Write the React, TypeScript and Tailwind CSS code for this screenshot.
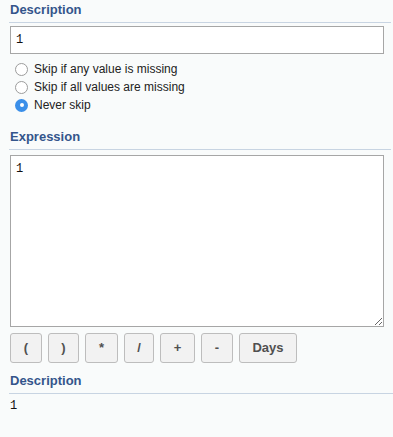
import React, { useState } from 'react';

const options = [
  'Skip if any value is missing',
  'Skip if all values are missing',
  'Never skip',
];

const buttons: { label: string; w: string }[] = [
  { label: '(', w: 'w-[32px]' },
  { label: ')', w: 'w-[31px]' },
  { label: '*', w: 'w-[33px]' },
  { label: '/', w: 'w-[30px]' },
  { label: '+', w: 'w-[35px]' },
  { label: '-', w: 'w-[32px]' },
  { label: 'Days', w: 'w-[58px]' },
];

const Heading: React.FC<{ children: React.ReactNode }> = ({ children }) => (
  <div className="pt-px pb-[5px] pl-px text-[13px] leading-[15px] font-bold text-[#34558b] border-b border-[#c8d4e2]">
    {children}
  </div>
);

const App: React.FC = () => {
  const [skip, setSkip] = useState(2);
  const [expr, setExpr] = useState('1');

  return (
    <div className="min-h-[437px] bg-[#f9fbfb] pl-[9px] pt-px font-['Liberation_Sans',Arial,sans-serif] text-[12px] text-[#222]">
      <div className="pr-[2px]">
        <Heading>Description</Heading>
        <input
          defaultValue="1"
          className="mt-[3px] ml-px block h-[28px] w-[374px] border border-[#a6a6a6] bg-white px-[5px] font-['Liberation_Mono',monospace] text-[12px] text-[#111] outline-none"
        />
        <div className="mt-[6px] ml-px">
          {options.map((opt, i) => (
            <label
              key={opt}
              onClick={() => setSkip(i)}
              className="flex h-[18px] cursor-pointer items-center"
            >
              {skip === i ? (
                <span className="ml-[5px] flex h-[13px] w-[13px] items-center justify-center rounded-full bg-[#3b8fe9]">
                  <span className="h-[4px] w-[4px] rounded-full bg-white" />
                </span>
              ) : (
                <span className="ml-[5px] h-[13px] w-[13px] rounded-full border border-[#9c9c9c] bg-white" />
              )}
              <span className="ml-[6px]">{opt}</span>
            </label>
          ))}
        </div>

        <div className="mt-[14px]">
          <Heading>Expression</Heading>
        </div>
        <textarea
          value={expr}
          onChange={(e) => setExpr(e.target.value)}
          className="mt-[5px] ml-px block h-[172px] w-[374px] border border-[#a6a6a6] bg-white px-[5px] pt-[6px] font-['Liberation_Mono',monospace] text-[12px] leading-[14px] text-[#111] outline-none"
        />
        <div className="mt-[6px] ml-px flex gap-[6px]">
          {buttons.map((b) => (
            <button
              key={b.label}
              onClick={() => setExpr(expr + b.label)}
              className={`${b.w} h-[30px] rounded-[3px] border border-[#bdbdbd] bg-[#f2f2f2] text-[13px] font-bold text-[#505050]`}
            >
              {b.label}
            </button>
          ))}
        </div>
      </div>

      <div className="mt-[9px]">
        <Heading>Description</Heading>
        <div className="mt-[5px] ml-px font-['Liberation_Mono',monospace] text-[12px] leading-[14px] text-[#111]">
          {expr}
        </div>
      </div>
    </div>
  );
};

export default App;
